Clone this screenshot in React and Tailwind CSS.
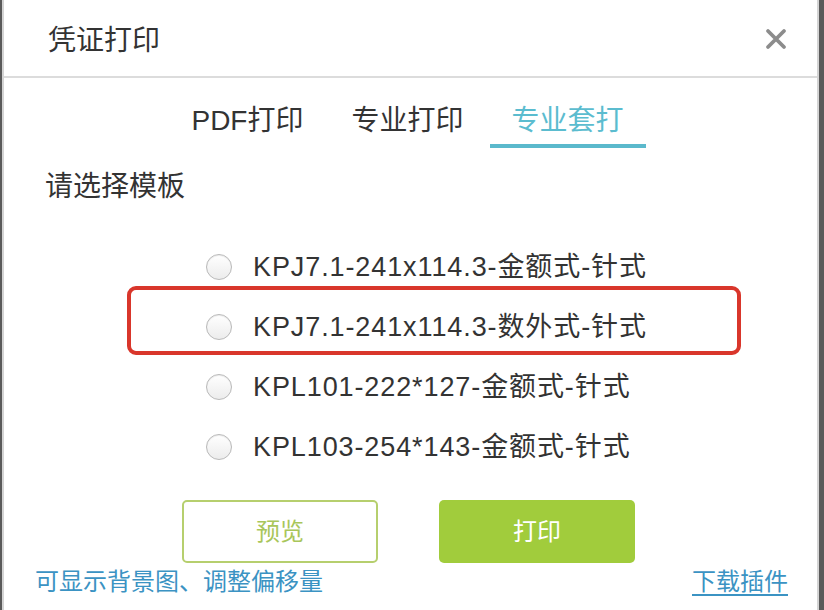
const templates = [
  "KPJ7.1-241x114.3-金额式-针式",
  "KPJ7.1-241x114.3-数外式-针式",
  "KPL101-222*127-金额式-针式",
  "KPL103-254*143-金额式-针式",
];

function Radio() {
  return (
    <span className="h-[26px] w-[26px] shrink-0 rounded-full border border-[#b9b9b9] bg-gradient-to-b from-white to-[#ececec] shadow-[inset_0_1px_1px_rgba(0,0,0,0.08)]" />
  );
}

export default function App() {
  return (
    <div className="flex h-[610px] w-[824px] bg-[#5a5a5a] pl-[2px] pr-[5px] font-['Liberation_Sans','Noto_Sans_CJK_SC',sans-serif] text-[#333]">
      <div className="relative flex flex-1 flex-col border-x-2 border-[#d4d4d4] bg-white">
        {/* header */}
        <div className="flex h-[78px] shrink-0 items-center justify-between border-b-2 border-[#dcdcdc] pl-[44px] pr-[30px] pt-[5px]">
          <h1 className="text-[28px] leading-none">凭证打印</h1>
          <svg width="22" height="22" viewBox="0 0 22 22" className="mb-[4px] text-[#8c8c8c]">
            <path d="M3 3L19 19M19 3L3 19" stroke="currentColor" strokeWidth="3.8" strokeLinecap="round" />
          </svg>
        </div>

        {/* tabs */}
        <div className="mt-[23px] flex justify-center gap-[4px] pr-[6px]">
          <div className="border-b-4 border-transparent px-[22px] pb-[3px] text-[28px] leading-[40px]">PDF打印</div>
          <div className="border-b-4 border-transparent px-[22px] pb-[3px] text-[28px] leading-[40px]">专业打印</div>
          <div className="border-b-4 border-[#5bb9cc] px-[22px] pb-[2px] text-[28px] leading-[40px] text-[#5bbccf]">专业套打</div>
        </div>

        <p className="mt-[19px] pl-[41px] text-[28px] leading-[40px]">请选择模板</p>

        {/* template list */}
        <ul className="mt-[30px] flex flex-col pl-[202px]">
          {templates.map((t) => (
            <li key={t} className="flex h-[60px] items-center gap-[21px]">
              <Radio />
              <span className="text-[27px] leading-none tracking-[0.9px]">{t}</span>
            </li>
          ))}
        </ul>

        {/* highlight annotation */}
        <div className="pointer-events-none absolute left-[123px] top-[286px] h-[69px] w-[614px] rounded-[9px] border-4 border-[#d9362b]" />

        {/* buttons */}
        <div className="mt-[23px] flex justify-center gap-[61px] pr-[4px]">
          <button className="h-[63px] w-[196px] rounded-[5px] border-2 border-[#b6cf6e] bg-white text-[24px] text-[#a9c65a]">
            预览
          </button>
          <button className="h-[63px] w-[196px] rounded-[5px] bg-[#a1cc3c] text-[24px] text-white">
            打印
          </button>
        </div>

        {/* footer */}
        <div className="mt-[4px] flex items-center justify-between pl-[31px] pr-[29px] text-[24px] leading-[30px] text-[#3b93c3]">
          <span>可显示背景图、调整偏移量</span>
          <span className="underline underline-offset-[4px]">下载插件</span>
        </div>
      </div>
    </div>
  );
}
